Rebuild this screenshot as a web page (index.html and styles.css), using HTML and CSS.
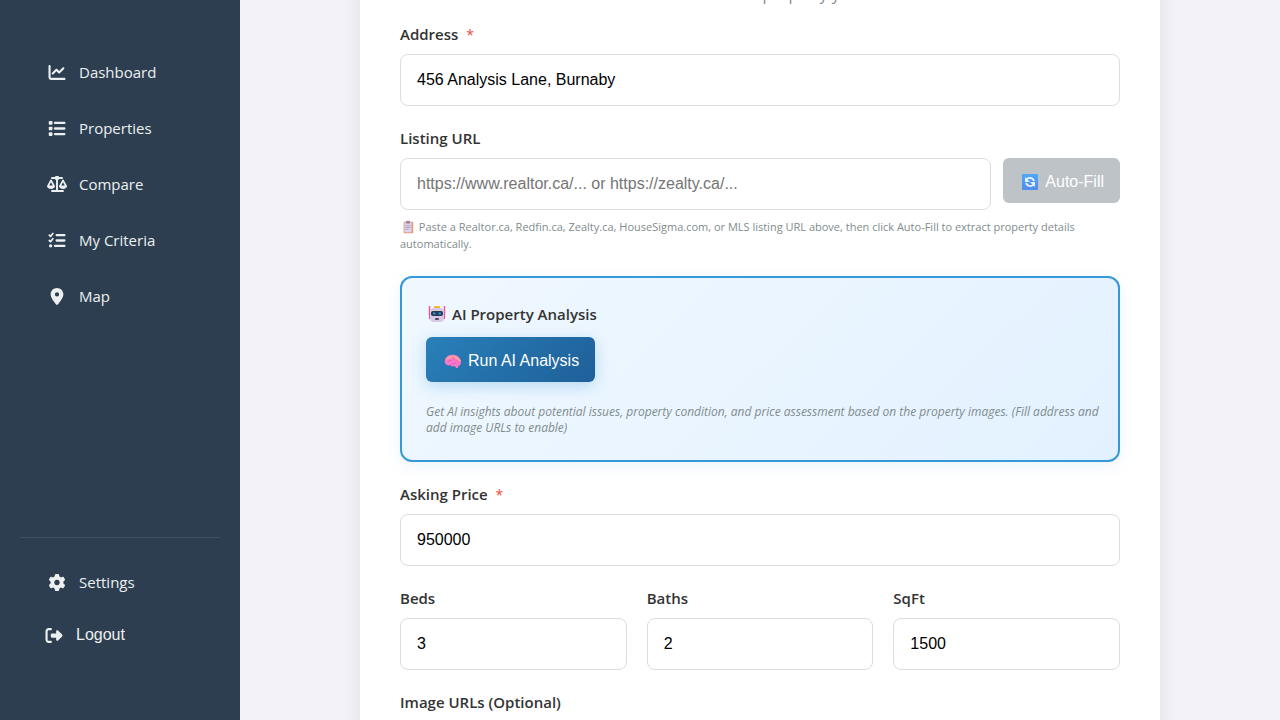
FILE: index.html
```html
<!DOCTYPE html>
<html lang="en">
<head>
<meta charset="utf-8">
<title>Add Property</title>
<meta name="viewport" content="width=device-width, initial-scale=1">
<link rel="stylesheet" href="styles.css">
</head>
<body>
<div class="app">
  <aside class="sidebar">
    <nav class="nav" aria-label="Main">
      <a class="nav-link" href="#dashboard">
        <svg class="nav-icon" viewBox="0 0 512 512" aria-hidden="true"><path d="M64 64c0-17.700-14.300-32-32-32S0 46.300 0 64V400c0 44.200 35.800 80 80 80H480c17.700 0 32-14.300 32-32s-14.300-32-32-32H80c-8.800 0-16-7.200-16-16V64zm406.600 86.600c12.500-12.500 12.500-32.800 0-45.300s-32.800-12.500-45.300 0L320 210.700l-57.400-57.400c-12.500-12.500-32.800-12.500-45.300 0l-112 112c-12.500 12.500-12.500 32.800 0 45.300s32.800 12.500 45.300 0L240 221.300l57.400 57.400c12.500 12.500 32.800 12.500 45.300 0l128-128z"/></svg>
        Dashboard
      </a>
      <a class="nav-link" href="#properties">
        <svg class="nav-icon" viewBox="0 0 512 512" aria-hidden="true"><rect x="8" y="32" width="112" height="112" rx="28"/><rect x="8" y="200" width="112" height="112" rx="28"/><rect x="8" y="368" width="112" height="112" rx="28"/><rect x="160" y="56" width="352" height="68" rx="32"/><rect x="160" y="222" width="352" height="68" rx="32"/><rect x="160" y="388" width="352" height="68" rx="32"/></svg>
        Properties
      </a>
      <a class="nav-link" href="#compare">
        <svg class="nav-icon nav-icon-wide" viewBox="0 0 640 512" aria-hidden="true"><g fill="none" stroke="currentColor" stroke-width="62" stroke-linecap="round" stroke-linejoin="round"><path d="M160 64H480M160 480H512M320 40V470"/></g><circle cx="320" cy="64" r="72"/><path fill-rule="evenodd" d="M128 112c10 0 19 5 24 14l92 166c7 13 12 24 12 38 0 44-58 86-128 86S0 374 0 330c0-14 5-25 12-38l92-166c5-9 14-14 24-14zM128 202L72 304H184zM512 112c10 0 19 5 24 14l92 166c7 13 12 24 12 38 0 44-58 86-128 86s-128-42-128-86c0-14 5-25 12-38l92-166c5-9 14-14 24-14zM512 202L456 304H568z"/></svg>
        Compare
      </a>
      <a class="nav-link" href="#criteria">
        <svg class="nav-icon" viewBox="0 0 512 512" aria-hidden="true"><path fill="none" stroke="currentColor" stroke-width="52" stroke-linecap="round" stroke-linejoin="round" d="M24 96l38 36 68-88M24 256l38 36 68-88"/><circle cx="64" cy="416" r="50"/><rect x="212" y="62" width="300" height="68" rx="32"/><rect x="212" y="222" width="300" height="68" rx="32"/><rect x="160" y="382" width="352" height="68" rx="32"/></svg>
        My Criteria
      </a>
      <a class="nav-link" href="#map">
        <svg class="nav-icon" viewBox="-64 0 512 512" aria-hidden="true"><path d="M215.700 499.200C267 435 384 279.400 384 192C384 86 298 0 192 0S0 86 0 192c0 87.400 117 243 168.300 307.200c12.300 15.300 35.100 15.300 47.400 0zM192 128a64 64 0 1 1 0 128 64 64 0 1 1 0-128z"/></svg>
        Map
      </a>
    </nav>
    <div class="sidebar-footer">
      <a class="nav-link" href="#settings">
        <svg class="nav-icon" viewBox="0 0 512 512" aria-hidden="true"><path d="M495.900 166.600c3.200 8.700 .5 18.400-6.400 24.600l-43.300 39.400c1.100 8.300 1.700 16.800 1.700 25.400s-.6 17.100-1.700 25.400l43.300 39.400c6.900 6.200 9.600 15.900 6.400 24.600c-4.400 11.900-9.700 23.300-15.800 34.300l-4.700 8.100c-6.600 11-14 21.400-22.100 31.200c-5.900 7.200-15.700 9.600-24.500 6.800l-55.700-17.700c-13.400 10.300-28.200 18.900-44 25.400l-12.500 57.100c-2 9.100-9 16.300-18.200 17.800c-13.800 2.300-28 3.500-42.500 3.500s-28.700-1.200-42.500-3.500c-9.200-1.500-16.200-8.700-18.200-17.800l-12.500-57.100c-15.800-6.500-30.600-15.100-44-25.400L83.100 425.900c-8.800 2.800-18.600 .3-24.500-6.800c-8.100-9.800-15.500-20.200-22.100-31.200l-4.700-8.100c-6.100-11-11.400-22.400-15.800-34.300c-3.200-8.700-.5-18.400 6.400-24.600l43.300-39.400C64.600 273.100 64 264.600 64 256s.6-17.100 1.700-25.400L22.400 191.200c-6.900-6.200-9.600-15.900-6.400-24.600c4.400-11.900 9.700-23.300 15.800-34.300l4.700-8.100c6.600-11 14-21.400 22.100-31.200c5.900-7.200 15.700-9.600 24.500-6.800l55.700 17.700c13.400-10.300 28.200-18.900 44-25.400l12.500-57.100c2-9.100 9-16.300 18.200-17.800C227.300 1.200 241.500 0 256 0s28.700 1.200 42.500 3.500c9.200 1.500 16.200 8.700 18.200 17.800l12.500 57.100c15.800 6.500 30.600 15.100 44 25.400l55.700-17.700c8.800-2.800 18.600-.3 24.500 6.800c8.100 9.800 15.500 20.200 22.100 31.200l4.700 8.100c6.100 11 11.400 22.400 15.800 34.300zM256 336a80 80 0 1 0 0-160 80 80 0 1 0 0 160z"/></svg>
        Settings
      </a>
      <button class="nav-link logout" type="button">
        <svg class="nav-icon" viewBox="0 0 512 512" aria-hidden="true"><path d="M377.900 105.900L500.700 228.700c7.200 7.200 11.300 17.100 11.300 27.300s-4.100 20.100-11.300 27.300L377.900 406.100c-6.400 6.400-15 9.900-24 9.900c-18.700 0-33.900-15.200-33.900-33.900l0-62.100-128 0c-17.700 0-32-14.300-32-32l0-64c0-17.700 14.300-32 32-32l128 0 0-62.100c0-18.700 15.200-33.900 33.900-33.900c9 0 17.600 3.600 24 9.900zM160 96L96 96c-17.700 0-32 14.300-32 32l0 256c0 17.700 14.300 32 32 32l64 0c17.700 0 32 14.300 32 32s-14.300 32-32 32l-64 0c-53 0-96-43-96-96L0 128C0 75 43 32 96 32l64 0c17.700 0 32 14.300 32 32s-14.300 32-32 32z"/></svg>
        Logout
      </button>
    </div>
  </aside>

  <main class="content">
    <form class="card">
      <p class="subtitle">Enter all the details of the property you want to add</p>

      <div class="field">
        <label class="label" for="address">Address <span class="required">*</span></label>
        <input class="input" id="address" type="text" value="456 Analysis Lane, Burnaby">
      </div>

      <div class="field">
        <label class="label" for="listing">Listing URL</label>
        <div class="input-row">
          <input class="input" id="listing" type="url" placeholder="https://www.realtor.ca/... or https://zealty.ca/...">
          <button class="button button-muted" type="button">
            <svg class="emoji" viewBox="0 0 20 20" aria-hidden="true"><defs><linearGradient id="sync" x2="0" y2="1"><stop stop-color="#4ca8fa"/><stop offset="1" stop-color="#528bf0"/></linearGradient></defs><rect x="2" y="2" width="16" height="16" rx="1" fill="url(#sync)"/><path d="M6 8.500C7.500 5 12.500 5 14 9M14 11.500C12.500 15 7.500 15 6 11" fill="none" stroke="#e8f2fc" stroke-width="1.800"/><path d="M5 5v5h5zM15 15v-5h-5z" fill="#e8f2fc"/></svg>
            Auto-Fill
          </button>
        </div>
        <p class="hint"><svg class="emoji emoji-small" viewBox="0 0 16 16" aria-hidden="true"><rect x="3" y="2" width="11" height="13" rx="1" fill="#e59a7c"/><rect x="4" y="3" width="8" height="11" fill="#ded5ec"/><path d="M6 1h4v3H6z" fill="#8f819f"/><path d="M5 6.500h6M5 8.500h6M5 10.500h4" stroke="#aaa0bf"/></svg> Paste a Realtor.ca, Redfin.ca, Zealty.ca, HouseSigma.com, or MLS listing URL above, then click Auto-Fill to extract property details automatically.</p>
      </div>

      <section class="analysis" aria-labelledby="analysis-title">
        <h2 class="label analysis-title" id="analysis-title"><svg class="emoji" viewBox="0 0 20 20" aria-hidden="true"><path d="M2.500 2v9M17.500 2v9" stroke="#f25a8e" stroke-width="1.500"/><path d="M2 9h2v6H2zM16 9h2v6h-2z" fill="#e9578c"/><rect x="7" y="2" width="6" height="3" rx="1" fill="#f9b528"/><rect x="3" y="4" width="14" height="14" rx="4" fill="#d9c7e6"/><rect x="4" y="7" width="12" height="5" rx="2" fill="#273950"/><path d="M6 9.500h2.500M11.500 9.500H14" stroke="#2f94e0" stroke-width="2"/><rect x="8" y="14" width="4" height="2" rx="1" fill="#51445d"/></svg> AI Property Analysis</h2>
        <button class="button button-primary" type="button">
          <svg class="emoji" viewBox="0 0 20 20" aria-hidden="true"><path d="M2 12c-1-4 2-8 6-8 5-1 9 2 10 6 0 3-1 5-3 5l0 2h-2l-1-2c-2 1-4 0-5-1-2 1-4 0-5-2z" fill="#fa78cb"/><path d="M4 9c1-3 4-4 7-3s5 3 6 4" fill="none" stroke="#ffa39a" stroke-width="2"/><path d="M5 11c1-2 3-2 4-1m1-4c-1 1 0 2 2 2m-4 5c2 0 4 0 5-2m1-2c0 1 1 2 2 2" fill="none" stroke="#e75fae"/></svg>
          Run AI Analysis
        </button>
        <p class="analysis-note">Get AI insights about potential issues, property condition, and price assessment based on the property images. (Fill address and add image URLs to enable)</p>
      </section>

      <div class="field">
        <label class="label" for="price">Asking Price <span class="required">*</span></label>
        <input class="input" id="price" type="number" value="950000">
      </div>

      <div class="columns">
        <div class="field">
          <label class="label" for="beds">Beds</label>
          <input class="input" id="beds" type="number" value="3">
        </div>
        <div class="field">
          <label class="label" for="baths">Baths</label>
          <input class="input" id="baths" type="number" value="2">
        </div>
        <div class="field">
          <label class="label" for="sqft">SqFt</label>
          <input class="input" id="sqft" type="number" value="1500">
        </div>
      </div>

      <div class="field">
        <label class="label" for="images">Image URLs (Optional)</label>
        <textarea class="input" id="images" rows="4"></textarea>
      </div>
    </form>
  </main>
</div>
</body>
</html>
```
FILE: styles.css
```css
* {
  box-sizing: border-box;
}

body {
  margin: 0;
  background: #f3f2f8;
  color: #333;
  font-family: "Segoe UI", "Open Sans", sans-serif;
  font-size: 15px;
}

.app {
  display: flex;
  height: 100vh;
  overflow: hidden;
}

/* Sidebar */
.sidebar {
  display: flex;
  flex: 0 0 240px;
  flex-direction: column;
  justify-content: space-between;
  padding: 52px 20px;
  background: #2c3e50;
}

.nav {
  display: flex;
  flex-direction: column;
  gap: 16px;
}

.nav-link {
  display: flex;
  align-items: center;
  gap: 13px;
  height: 40px;
  padding: 0 28px;
  color: #ecf0f1;
  line-height: 20px;
  text-decoration: none;
}

.nav-icon {
  flex: none;
  width: 18px;
  height: 17px;
  fill: currentColor;
}

.nav-icon-wide {
  width: 20px;
  height: 16px;
  margin: 0 -1px;
}

.sidebar-footer {
  display: flex;
  flex-direction: column;
  gap: 13px;
  padding: 24px 0 13px;
  border-top: 1px solid #415162;
}

.logout {
  padding: 0 25px;
  border: 0;
  background: none;
  font-family: "Liberation Sans", Arial, sans-serif;
  font-size: 16px;
}

/* Form card */
.content {
  display: flex;
  flex: 1;
  justify-content: center;
  align-items: flex-start;
  overflow: hidden;
}

.card {
  display: flex;
  flex: 0 1 800px;
  flex-direction: column;
  gap: 22px;
  margin-top: -54px;
  padding: 40px;
  background: #fff;
  box-shadow: 0 4px 20px rgba(0, 0, 0, 0.08);
}

.subtitle {
  margin: 0;
  color: #7f8c8d;
  font-size: 16px;
  line-height: 16px;
  text-align: center;
}

.label {
  display: block;
  margin: 0 0 10px;
  color: #333;
  font-size: 15px;
  font-weight: 600;
  line-height: 20px;
}

.required {
  margin-left: 4px;
  color: #e74c3c;
  font-size: 14px;
  font-weight: 400;
  line-height: 14px;
}

.input {
  display: block;
  width: 100%;
  min-width: 0;
  padding: 16px;
  border: 1px solid #ddd;
  border-radius: 8px;
  background: #fff;
  color: #000;
  font-family: "Liberation Sans", Arial, sans-serif;
  font-size: 16px;
  line-height: 18px;
}

.input::placeholder {
  color: #757575;
}

.input-row {
  display: flex;
  align-items: flex-start;
  gap: 12px;
}

.button {
  display: inline-flex;
  flex: none;
  align-items: center;
  gap: 4px;
  height: 45px;
  padding: 2px 16px 0;
  border: 0;
  border-radius: 6px;
  color: #fff;
  font-family: "Liberation Sans", Arial, sans-serif;
  font-size: 16px;
}

.button-muted {
  background: #bdc3c7;
}

.button-primary {
  background: linear-gradient(135deg, #2980b9, #1f5f99);
  box-shadow: 0 4px 15px rgba(52, 152, 219, 0.3);
}

.emoji {
  flex: none;
  width: 22px;
  height: 20px;
}

.emoji-small {
  width: 16px;
  height: 14px;
  vertical-align: -3px;
}

.hint {
  margin: 8px 0 2px;
  color: #7f8c8d;
  font-size: 11px;
  line-height: 17px;
}

.analysis {
  padding: 24px 16px 24px 24px;
  border: 2px solid #3498db;
  border-radius: 12px;
  background: linear-gradient(135deg, #f0f8ff, #e3f1ff);
  box-shadow: 0 4px 15px rgba(52, 152, 219, 0.1);
}

.analysis-title {
  display: flex;
  align-items: center;
  gap: 4px;
  margin-bottom: 11px;
  line-height: 24px;
}

.analysis-note {
  margin: 22px 0 0;
  color: #7f8c8d;
  font-size: 12px;
  font-style: italic;
  line-height: 16px;
}

.columns {
  display: grid;
  grid-template-columns: repeat(3, 1fr);
  gap: 20px;
}
```
